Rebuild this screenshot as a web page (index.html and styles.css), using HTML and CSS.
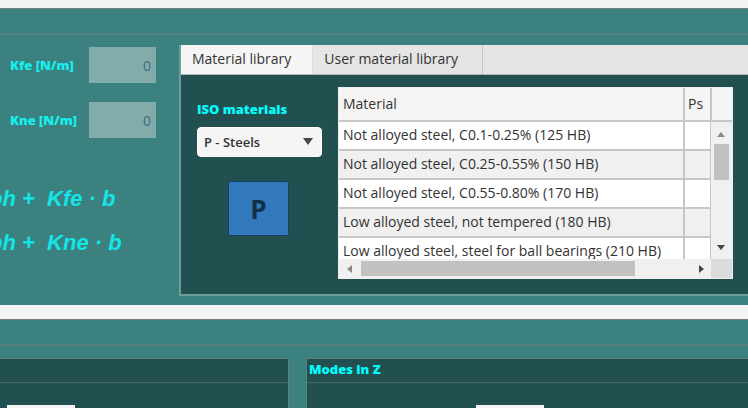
FILE: index.html
```html
<!DOCTYPE html>
<html lang="en">
<head>
<meta charset="utf-8">
<title>Material library</title>
<link rel="stylesheet" href="styles.css">
</head>
<body>
<section class="panel">
  <div class="panel-head"></div>
  <div class="panel-body">
    <div class="coefficients">
      <div class="field"><label for="kfe">Kfe [N/m]</label><input id="kfe" value="0" disabled></div>
      <div class="field"><label for="kne">Kne [N/m]</label><input id="kne" value="0" disabled></div>
      <div class="formulas">
        <p>ph +&nbsp; Kfe · b</p>
        <p>ph +&nbsp; Kne · b</p>
      </div>
    </div>
    <div class="library">
      <div class="tabs" role="tablist">
        <button class="tab active" role="tab" aria-selected="true">Material library</button>
        <button class="tab" role="tab" aria-selected="false">User material library</button>
      </div>
      <div class="library-body">
        <div class="iso">
          <label for="iso">ISO materials</label>
          <div class="select">
            <select id="iso"><option>P - Steels</option></select>
            <svg viewBox="0 0 10 7"><path d="M0 0h10L5 7z"/></svg>
          </div>
          <button class="group">P</button>
        </div>
        <div class="grid">
          <div class="viewport">
            <table>
              <thead><tr><th>Material</th><th class="ps">Ps</th><th class="gutter"></th></tr></thead>
              <tbody>
                <tr><td>Not alloyed steel, C0.1-0.25% (125 HB)</td><td></td><td></td></tr>
                <tr><td>Not alloyed steel, C0.25-0.55% (150 HB)</td><td></td><td></td></tr>
                <tr><td>Not alloyed steel, C0.55-0.80% (170 HB)</td><td></td><td></td></tr>
                <tr><td>Low alloyed steel, not tempered (180 HB)</td><td></td><td></td></tr>
                <tr><td>Low alloyed steel, steel for ball bearings (210 HB)</td><td></td><td></td></tr>
              </tbody>
            </table>
          </div>
          <div class="vbar">
            <svg class="up" viewBox="0 0 8 5"><path d="M0 5h8L4 0z"/></svg>
            <span class="thumb"></span>
            <svg class="down" viewBox="0 0 8 5"><path d="M0 0h8L4 5z"/></svg>
          </div>
          <div class="hbar">
            <svg class="left" viewBox="0 0 5 8"><path d="M5 0v8L0 4z"/></svg>
            <span class="track"><span class="thumb"></span></span>
            <svg class="right" viewBox="0 0 5 8"><path d="M0 0v8l5-4z"/></svg>
            <span class="corner"></span>
          </div>
        </div>
      </div>
    </div>
  </div>
</section>
<section class="panel modes-panel">
  <div class="panel-head"></div>
  <div class="modes">
    <div class="card"><h2></h2><input class="left-input" aria-label="Mode value"></div>
    <div class="card"><h2>Modes in Z</h2><input class="right-input" aria-label="Mode in Z value"></div>
  </div>
</section>
</body>
</html>
```
FILE: styles.css
```css
* { box-sizing: border-box; }
body {
  margin: 0;
  padding-top: 8px;
  height: 100vh;
  overflow: hidden;
  display: flex;
  flex-direction: column;
  background: #f3f3f3;
  font: 14px/18px "Open Sans", "Noto Sans", sans-serif;
  color: #333;
}
button, input, select { font: inherit; color: inherit; }
.panel {
  flex: none;
  background: #3b8180;
  border-top: 1px solid #74817f;
  margin-bottom: 14px;
}
.modes-panel { flex: 1 1 0; min-height: 0; margin: 0; overflow: hidden; }
.panel-head { height: 26px; border-bottom: 2px solid #527e7b; }
.panel-body { display: flex; padding: 10px 0 9px; }
.coefficients { width: 179px; flex: none; padding-top: 2px; overflow: hidden; }
.field {
  display: flex;
  align-items: center;
  justify-content: space-between;
  margin: 0 23px 19px 10px;
}
label, h2 { font-size: 13px; line-height: 16px; font-weight: 800; color: #0ff; }
.field label { color: #16f0ee; }
.field input {
  width: 67px;
  height: 36px;
  padding: 0 5px;
  border: 0;
  background: #82acac;
  color: #3e6d6d;
  text-align: right;
}
.formulas {
  margin: 49px 0 0 -11px;
  font: italic bold 22px/24px "Liberation Sans", sans-serif;
  color: #12e6e6;
  white-space: nowrap;
}
.formulas p { margin: 0 0 20px; }
.formulas p:last-child { margin: 0; }
.library {
  flex: 1;
  min-width: 0;
  border-left: 2px solid #6f9b9a;
  border-bottom: 2px solid #6f9b9a;
  background: #224f50;
}
.tabs { display: flex; height: 30px; background: #e5e5e5; border-bottom: 1px solid #aab6b6; }
.tab { border: 0; border-right: 1px solid #c6c6c6; background: #e5e5e5; padding: 0 24px 2px 11px; }
.tab.active { background: #f5f5f5; border-right-color: #ddd; padding-right: 21px; }
.library-body { display: flex; padding: 12px 15px 15px 16px; }
.iso { width: 141px; flex: none; padding-top: 14px; }
.iso label { display: block; }
.select { position: relative; width: 125px; margin-top: 10px; }
.select select {
  display: block;
  width: 100%;
  height: 30px;
  border: 1px solid #fff;
  border-radius: 4px;
  background: #f5f5f5;
  padding: 0 6px;
  appearance: none;
  font-size: 13px;
  font-weight: 600;
}
.select svg { position: absolute; right: 9px; top: 11px; width: 10px; height: 7px; fill: #484848; }
.group {
  display: block;
  width: 61px;
  height: 55px;
  margin: 24px 0 0 31px;
  padding: 0;
  border: 1px solid #183f5e;
  border-radius: 2px;
  background: #3279bd;
  color: #12304a;
  font: bold 26px/28px "Open Sans", sans-serif;
}
.grid {
  flex: 1;
  min-width: 0;
  position: relative;
  border: 1px solid #eee;
  background: #f0f0f0;
}
.viewport { height: 171px; overflow: hidden; }
table { width: 100%; table-layout: fixed; border-collapse: separate; border-spacing: 0; }
th, td {
  padding: 0 4px;
  border-right: 2px solid #c7c7c7;
  border-bottom: 2px solid #c7c7c7;
  text-align: left;
  font-weight: 400;
  white-space: nowrap;
}
th { height: 34px; background: #f4f4f4; }
.ps { width: 27px; padding: 0 3px; }
.gutter { width: 20px; }
th:last-child, td:last-child { border-right: 0; }
td { height: 29px; padding-bottom: 1px; background: #fff; }
tbody tr:nth-child(even) td { background: #f0f0f0; }
.vbar {
  position: absolute;
  top: 34px;
  right: 0;
  bottom: 19px;
  width: 21px;
  padding: 10px 4px 9px 3px;
  display: flex;
  flex-direction: column;
  align-items: center;
  background: #f0f0f0;
}
.vbar svg { width: 8px; height: 5px; }
.vbar .thumb { width: 15px; height: 36px; margin-top: 7px; background: #c1c1c1; }
.vbar .down { margin-top: auto; }
.up, .left { fill: #8a8a8a; }
.down, .right { fill: #444; }
.hbar { display: flex; align-items: center; height: 19px; padding-left: 8px; }
.hbar svg { width: 5px; height: 8px; }
.track { flex: 1; height: 15px; margin: 0 12px 0 9px; }
.track .thumb { display: block; width: 84%; height: 100%; background: #c1c1c1; }
.corner { width: 21px; height: 100%; margin-left: 7px; background: #dcdcdc; }
.modes { display: flex; gap: 17px; padding-top: 12px; }
.card {
  flex: 1;
  height: 80px;
  border: 1px solid #5c7f7e;
  border-right: 0;
  background: #224f50;
}
.card:first-child { flex: 0 0 289px; border-left: 0; border-right: 1px solid #5c7f7e; }
.card h2 { margin: 0; height: 24px; padding: 2px; border-bottom: 1px solid #446968; }
.card input { display: block; width: 68px; height: 30px; margin-top: 22px; border: 0; background: #f3f3f3; }
.left-input { margin-left: 7px; }
.right-input { margin-left: 169px; }
```
